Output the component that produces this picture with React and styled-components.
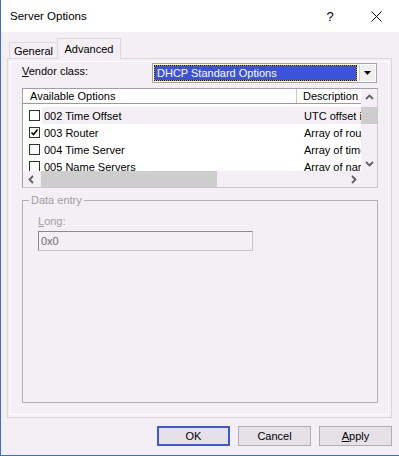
import styled, { createGlobalStyle } from 'styled-components';

const GlobalStyle = createGlobalStyle`
  html, body {
    margin: 0;
    padding: 0;
    background: #fff;
  }
  body {
    font-family: "Liberation Sans", Arial, sans-serif;
    font-size: 11px;
    color: #000;
  }
  * {
    box-sizing: border-box;
  }
`;

const BG = '#f3eff4';

const Window = styled.div`
  width: 399px;
  height: 456px;
  display: flex;
  flex-direction: column;
  border-left: 1px solid #3b6fe0;
  border-bottom: 1px solid #3b6fe0;
  background: ${BG};
`;

const TitleBar = styled.div`
  height: 32px;
  flex: none;
  background: #fff;
  display: flex;
  align-items: center;
  padding-left: 9px;
  font-size: 11.5px;
`;

const Title = styled.span`
  flex: 1;
`;

const TitleButton = styled.div`
  width: 46px;
  height: 32px;
  display: flex;
  align-items: center;
  justify-content: center;
  font-size: 13px;
`;

const Body = styled.div`
  flex: 1;
  display: flex;
  flex-direction: column;
  padding: 0 7px 0 6px;
`;

const TabStrip = styled.div`
  height: 27px;
  flex: none;
  display: flex;
  align-items: flex-end;
  padding-left: 2px;
  margin-bottom: -1px;
  position: relative;
  z-index: 1;
`;

const Tab = styled.div`
  height: ${p => (p.$active ? '21px' : '16px')};
  width: ${p => (p.$active ? '64px' : '48px')};
  margin-bottom: ${p => (p.$active ? '0' : '1px')};
  background: ${p => (p.$active ? BG : '#f3eff4')};
  border: 1px solid #d9d9d9;
  border-bottom: none;
  border-right: ${p => (p.$active ? '1px solid #d9d9d9' : 'none')};
  display: flex;
  align-items: ${p => (p.$active ? 'flex-start' : 'center')};
  justify-content: center;
  padding-top: ${p => (p.$active ? '4px' : '1px')};
  font-size: 11px;
`;

const Panel = styled.div`
  height: 360px;
  flex: none;
  border: 1px solid #d9d9d9;
  box-shadow: inset 0 0 0 2px ${BG}, inset 0 0 0 3px #fff;
  padding: 4px 13px 14px 14px;
  display: flex;
  flex-direction: column;
`;

const VendorRow = styled.div`
  display: flex;
  height: 20px;
  flex: none;
`;

const Label = styled.span`
  color: ${p => (p.$disabled ? '#a0a0a0' : '#000')};
  u {
    text-decoration: underline;
  }
`;

const VendorLabel = styled(Label)`
  width: 130px;
  flex: none;
  line-height: 14px;
  padding-top: 1px;
`;

const Combo = styled.div`
  width: 225px;
  height: 20px;
  border: 1px solid #a5a5a5;
  padding: 1px 1px 1px 1px;
  display: flex;
  gap: 2px;
  background: #fff;
`;

const ComboField = styled.div`
  flex: 1;
  border: 1px dotted #111;
  background: linear-gradient(#3b52d9, #3b52d9) padding-box, #f0a000 border-box;
  color: #fff;
  line-height: 14px;
  padding-left: 2px;
`;

const ComboButton = styled.div`
  width: 16px;
  background: #f0f0f0;
  border-left: 1px solid #d0d0d0;
  display: flex;
  align-items: center;
  justify-content: center;
`;

const ListBox = styled.div`
  margin-top: 5px;
  height: 100px;
  flex: none;
  border: 1px solid #a0a0a0;
  border-right-color: #c8c8c8;
  border-bottom-color: #c8c8c8;
  background: #fff;
  display: grid;
  grid-template-columns: 338px 16px;
  grid-template-rows: 82px 16px;
`;

const ListMain = styled.div`
  overflow: hidden;
  display: flex;
  flex-direction: column;
`;

const Header = styled.div`
  height: 15px;
  flex: none;
  display: grid;
  grid-template-columns: 274px 1fr;
  border-bottom: 1px solid #9a9a9a;
  background: #fff;
  line-height: 14px;
  margin-bottom: 3px;
`;

const HeaderCell = styled.div`
  padding-left: ${p => p.$pad}px;
  white-space: nowrap;
  overflow: hidden;
  border-right: ${p => (p.$divider ? '1px solid #c8c8c8' : 'none')};
`;

const Row = styled.div`
  height: 17px;
  flex: none;
  display: flex;
  align-items: stretch;
`;

const CheckCell = styled.div`
  width: 19px;
  flex: none;
  display: flex;
  align-items: center;
  padding-left: 6px;
`;

const CheckBox = styled.div`
  width: 11px;
  height: 11px;
  border: 1px solid #333;
  background: #fff;
  display: flex;
  align-items: center;
  justify-content: center;
`;

const RowBody = styled.div`
  flex: 1;
  display: grid;
  grid-template-columns: 255px 1fr;
  align-items: center;
  background: ${p => (p.$hot ? BG : '#fff')};
  white-space: nowrap;
  overflow: hidden;
`;

const Cell = styled.div`
  padding-left: ${p => p.$pad}px;
  overflow: hidden;
`;

const VScroll = styled.div`
  background: ${BG};
  display: flex;
  flex-direction: column;
`;

const HScroll = styled.div`
  background: ${BG};
  display: flex;
  align-items: stretch;
`;

const ArrowBox = styled.div`
  width: ${p => p.$w || 16}px;
  height: ${p => p.$h || 16}px;
  flex: none;
  display: flex;
  align-items: center;
  justify-content: center;
`;

const VThumb = styled.div`
  height: 17px;
  margin-top: 2px;
  background: #cdcdcd;
`;

const HThumb = styled.div`
  width: 176px;
  margin-left: 1px;
  background: #cdcdcd;
`;

const Spacer = styled.div`
  flex: 1;
`;

const Corner = styled.div`
  background: ${BG};
`;

const Group = styled.fieldset`
  margin: 6px 0 0 0;
  padding: 0 15px;
  flex: 1;
  border: 1px solid #b0b0b0;
  min-width: 0;
`;

const Legend = styled.legend`
  padding: 0 2px;
  margin-left: -9px;
  color: #a0a0a0;
  line-height: 13px;
`;

const FieldLabel = styled(Label)`
  display: block;
  margin-top: 8px;
  line-height: 13px;
`;

const TextBox = styled.div`
  margin-top: 3px;
  width: 215px;
  height: 20px;
  border: 1px solid #c8c8c8;
  border-top-color: #8a8a8a;
  border-left-color: #8a8a8a;
  color: #6d6d6d;
  line-height: 18px;
  padding-left: 2px;
`;

const ButtonRow = styled.div`
  display: flex;
  justify-content: flex-end;
  gap: 8px;
  padding-top: 8px;
`;

const Button = styled.div`
  width: 73px;
  height: 20px;
  background: #e5e1e6;
  border: ${p => (p.$default ? '2px solid #3c5ad8' : '1px solid #adadad')};
  display: flex;
  align-items: center;
  justify-content: center;
`;

const Chevron = ({ dir }) => {
  const pts = {
    up: '1,6 4.5,2.5 8,6',
    down: '1,3 4.5,6.5 8,3',
    left: '6,1 2.5,4.5 6,8',
    right: '3,1 6.5,4.5 3,8',
  }[dir];
  return (
    <svg width="9" height="9" viewBox="0 0 9 9">
      <polyline points={pts} fill="none" stroke="#606060" strokeWidth="1.8" />
    </svg>
  );
};

const options = [
  { name: '002 Time Offset', desc: 'UTC offset in seconds', checked: false, hot: true },
  { name: '003 Router', desc: 'Array of router addresses', checked: true },
  { name: '004 Time Server', desc: 'Array of time server addresses', checked: false },
  { name: '005 Name Servers', desc: 'Array of name servers', checked: false },
];

export default function App() {
  return (
    <>
      <GlobalStyle />
      <Window>
        <TitleBar>
          <Title>Server Options</Title>
          <TitleButton>?</TitleButton>
          <TitleButton>
            <svg width="11" height="11" viewBox="0 0 11 11">
              <path d="M0.5 0.5 L10.5 10.5 M10.5 0.5 L0.5 10.5" stroke="#000" strokeWidth="1" />
            </svg>
          </TitleButton>
        </TitleBar>
        <Body>
          <TabStrip>
            <Tab>General</Tab>
            <Tab $active>Advanced</Tab>
          </TabStrip>
          <Panel>
            <VendorRow>
              <VendorLabel>
                <u>V</u>endor class:
              </VendorLabel>
              <Combo>
                <ComboField>DHCP Standard Options</ComboField>
                <ComboButton>
                  <svg width="7" height="4" viewBox="0 0 7 4">
                    <polygon points="0,0 7,0 3.5,4" fill="#000" />
                  </svg>
                </ComboButton>
              </Combo>
            </VendorRow>

            <ListBox>
              <ListMain>
                <Header>
                  <HeaderCell $pad={7} $divider>Available Options</HeaderCell>
                  <HeaderCell $pad={6}>Description</HeaderCell>
                </Header>
                {options.map(o => (
                  <Row key={o.name}>
                    <CheckCell>
                      <CheckBox>
                        {o.checked && (
                          <svg width="9" height="9" viewBox="0 0 9 9">
                            <polyline points="1.5,4.5 3.5,6.5 7.5,1.5" fill="none" stroke="#000" strokeWidth="1.6" />
                          </svg>
                        )}
                      </CheckBox>
                    </CheckCell>
                    <RowBody $hot={o.hot}>
                      <Cell $pad={2}>{o.name}</Cell>
                      <Cell $pad={7}>{o.desc}</Cell>
                    </RowBody>
                  </Row>
                ))}
              </ListMain>
              <VScroll>
                <ArrowBox>
                  <Chevron dir="up" />
                </ArrowBox>
                <VThumb />
                <Spacer />
                <ArrowBox>
                  <Chevron dir="down" />
                </ArrowBox>
              </VScroll>
              <HScroll>
                <ArrowBox $w={17}>
                  <Chevron dir="left" />
                </ArrowBox>
                <HThumb />
                <Spacer />
                <ArrowBox>
                  <Chevron dir="right" />
                </ArrowBox>
              </HScroll>
              <Corner />
            </ListBox>

            <Group>
              <Legend>Data entry</Legend>
              <FieldLabel $disabled>
                <u>L</u>ong:
              </FieldLabel>
              <TextBox>0x0</TextBox>
            </Group>
          </Panel>

          <ButtonRow>
            <Button $default>OK</Button>
            <Button>Cancel</Button>
            <Button>
              <span>
                <u>A</u>pply
              </span>
            </Button>
          </ButtonRow>
        </Body>
      </Window>
    </>
  );
}
